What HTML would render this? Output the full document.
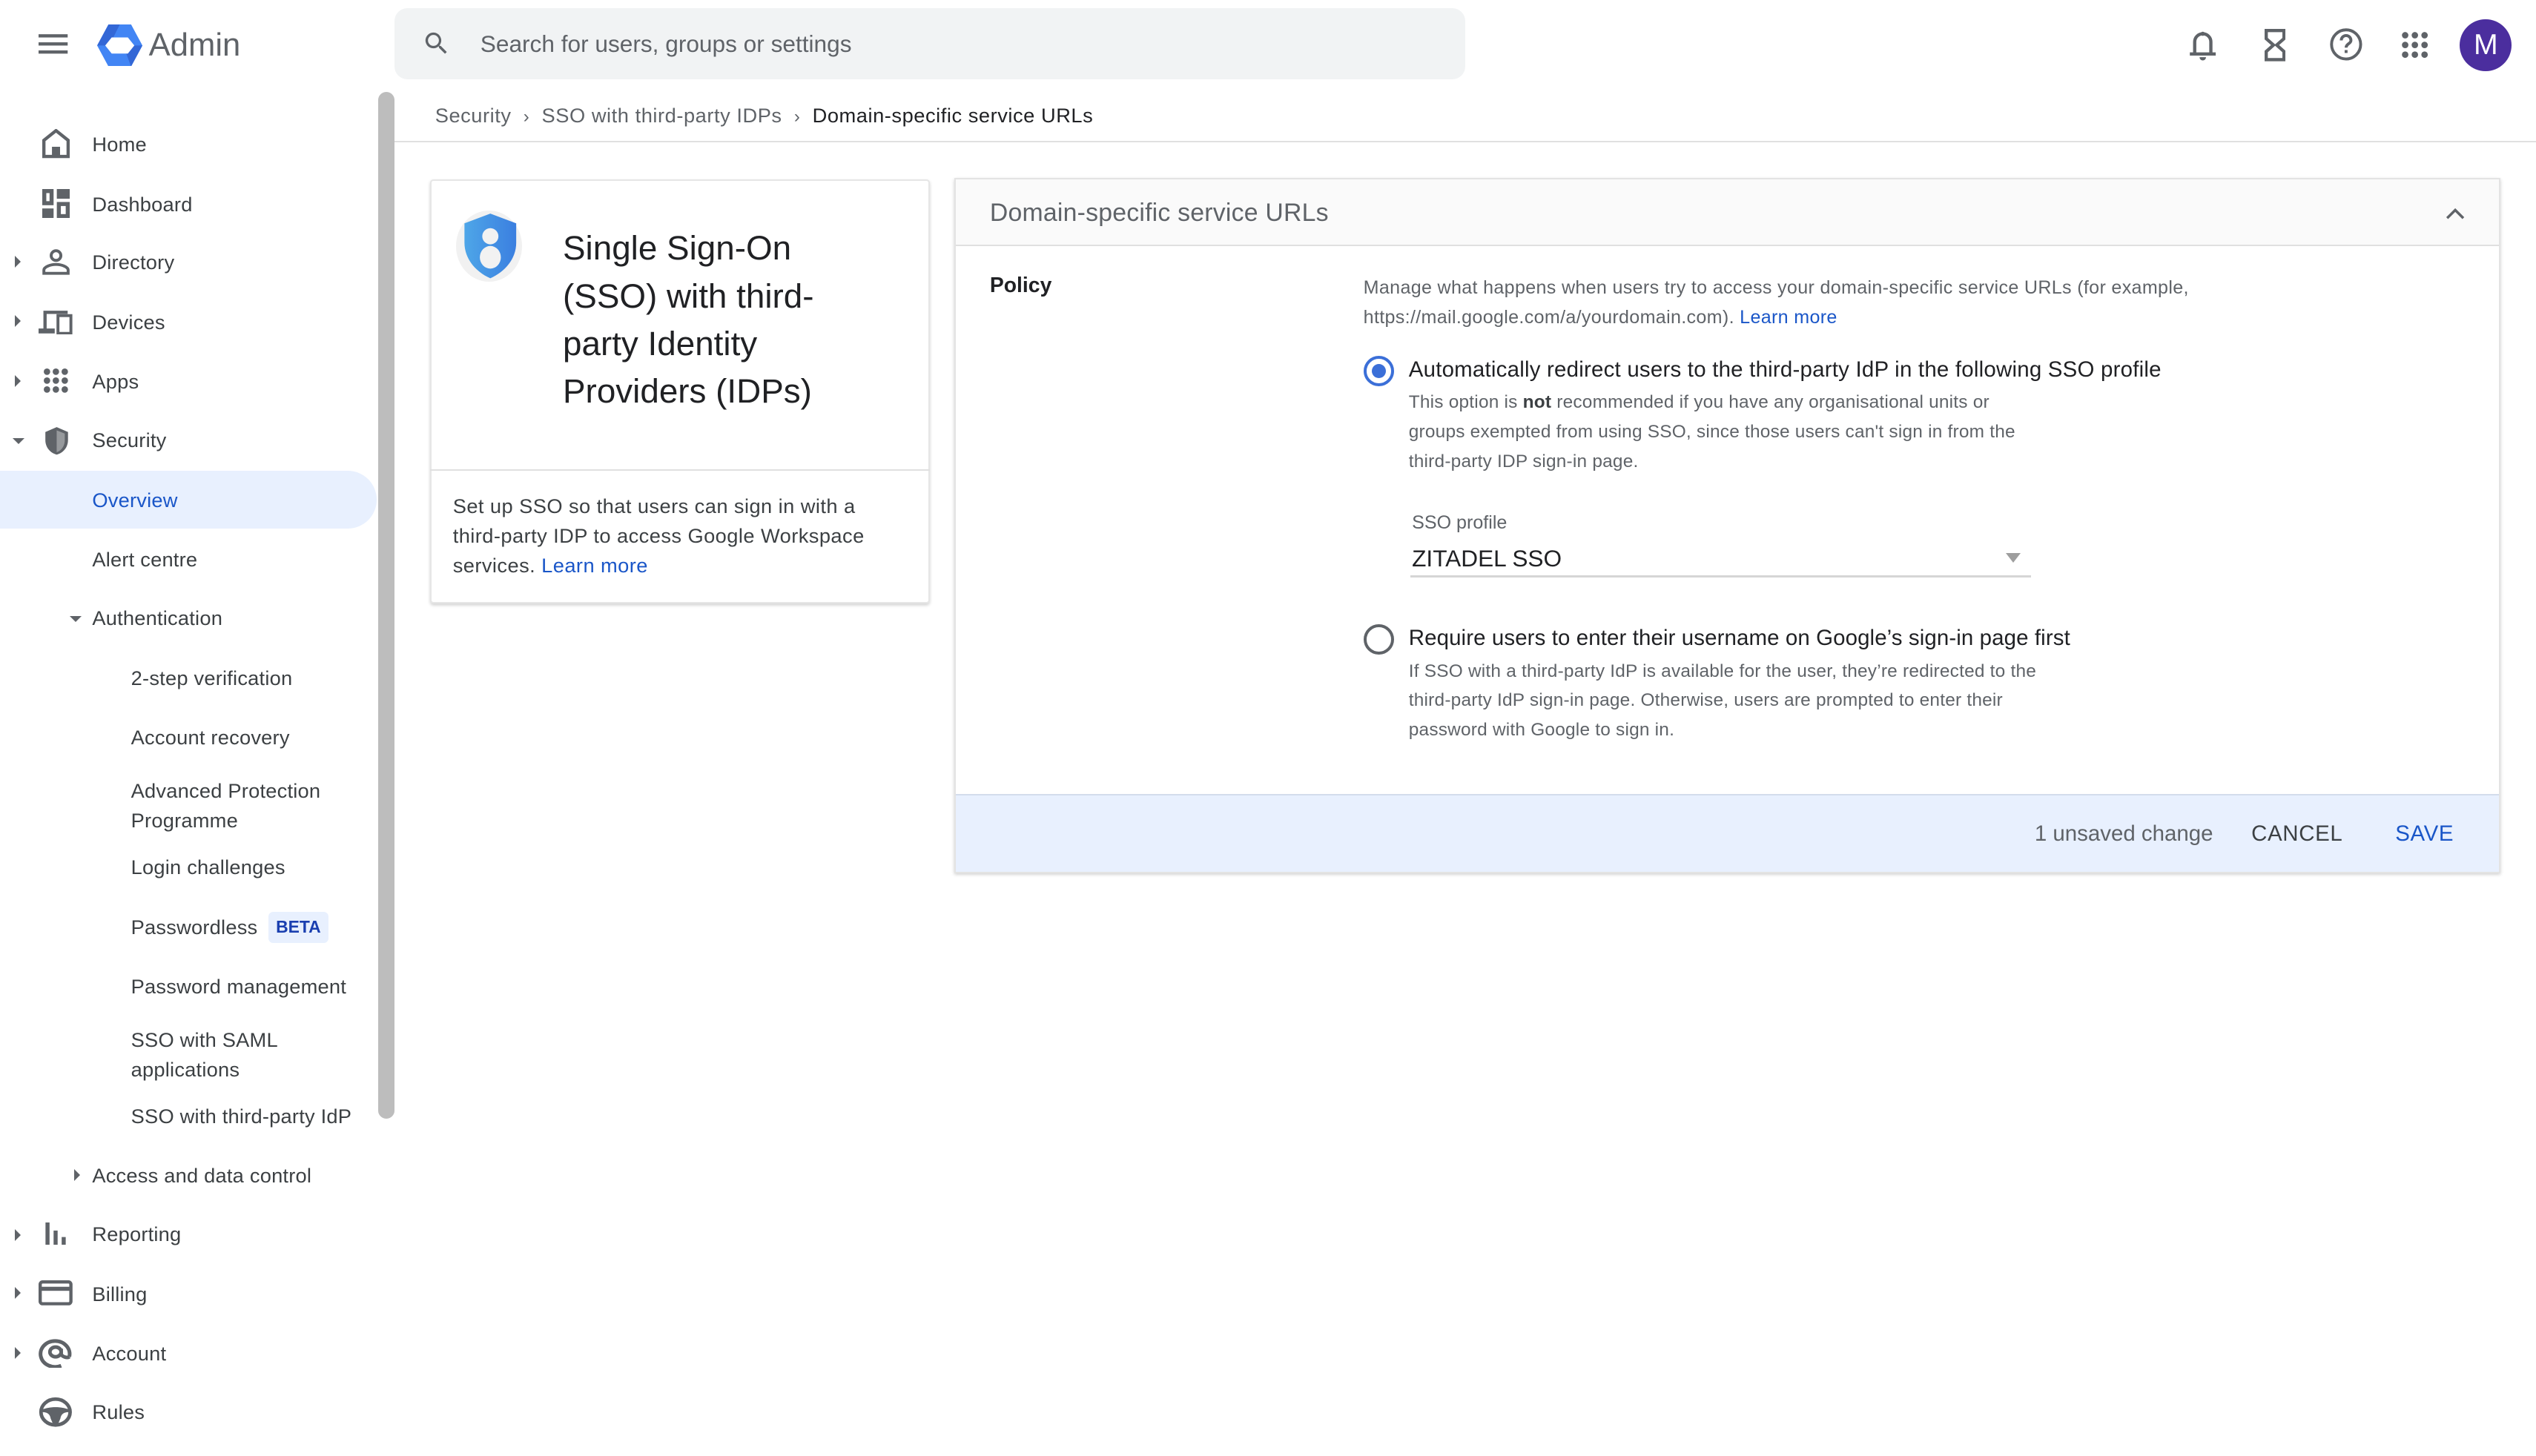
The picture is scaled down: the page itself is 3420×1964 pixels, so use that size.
<!DOCTYPE html>
<html><head><meta charset="utf-8"><style>
*{margin:0;padding:0;box-sizing:border-box}
html,body{width:3420px;height:1964px;overflow:hidden;background:#fff}
#w{zoom:2.18112;width:1568px;height:900.5px;position:relative;font-family:"Liberation Sans",Arial,sans-serif;color:#3c4043}
.a{position:absolute;white-space:nowrap}
.nav{font-size:12.5px;color:#3c4043;letter-spacing:.1px}
.ic{position:absolute}
.tri{position:absolute;width:0;height:0;border-top:4px solid transparent;border-bottom:4px solid transparent;border-left:4px solid #5f6368}
</style></head><body><div id="w">
<svg class="ic" style="left:24px;top:20px" width="18" height="14"><rect y="1" width="18" height="2" fill="#5f6368"/><rect y="6" width="18" height="2" fill="#5f6368"/><rect y="11" width="18" height="2" fill="#5f6368"/></svg>
<svg class="ic" style="left:60px;top:15px" width="28" height="26" viewBox="0 0 28 26"><polygon points="7,0 21,0 28,13 21,26 7,26 0,13" fill="#4285f4"/><polygon points="7,0 14,0 10,8 5,13 0,13" fill="#3367d6"/><polygon points="28,13 21,26 18,18 23,13" fill="#3367d6"/><polygon points="9,8 19,8 23,13 19,18 9,18 5,13" fill="#fff"/></svg>
<div class="a" style="left:92px;top:17px;font-size:20px;color:#5f6368">Admin</div>
<div class="a" style="left:244px;top:5px;width:662px;height:44px;background:#f1f3f4;border-radius:8px"></div>
<svg class="ic" style="left:261px;top:18px" width="18" height="18" viewBox="0 0 24 24"><path d="M15.5 14h-.8l-.3-.3A6.5 6.5 0 1 0 9.5 16a6.5 6.5 0 0 0 4.2-1.6l.3.3v.8l5 5 1.5-1.5-5-5zm-6 0a4.5 4.5 0 1 1 0-9 4.5 4.5 0 0 1 0 9z" fill="#5f6368"/></svg>
<div class="a" style="left:297px;top:19px;font-size:14.5px;color:#5f6368">Search for users, groups or settings</div>
<svg class="ic" style="left:1353px;top:18px" width="18" height="20" viewBox="0 0 18 20"><path d="M4 15V8a5 5 0 0 1 10 0v7" fill="none" stroke="#5f6368" stroke-width="2"/><rect x="1" y="14.5" width="16" height="2" fill="#5f6368"/><circle cx="9" cy="3" r="1.3" fill="#5f6368"/><path d="M7 17.5h4a2 2 0 0 1-4 0z" fill="#5f6368"/></svg>
<svg class="ic" style="left:1400px;top:18px" width="13" height="20" viewBox="0 0 13 20"><path d="M1 1h11v5L7.5 10 12 14v5H1v-5l4.5-4L1 6z" fill="none" stroke="#5f6368" stroke-width="2"/></svg>
<svg class="ic" style="left:1440px;top:17px" width="21" height="21" viewBox="0 0 21 21"><circle cx="10.5" cy="10.5" r="9" fill="none" stroke="#5f6368" stroke-width="1.8"/><path d="M7.5 8a3 3 0 0 1 6 0c0 2-3 2.2-3 4.5" fill="none" stroke="#5f6368" stroke-width="1.8"/><rect x="9.6" y="14" width="1.8" height="1.8" fill="#5f6368"/></svg>
<svg class="ic" style="left:1484px;top:19px" width="18" height="18"><g fill="#5f6368"><circle cx="3" cy="3" r="2"/><circle cx="9" cy="3" r="2"/><circle cx="15" cy="3" r="2"/><circle cx="3" cy="9" r="2"/><circle cx="9" cy="9" r="2"/><circle cx="15" cy="9" r="2"/><circle cx="3" cy="15" r="2"/><circle cx="9" cy="15" r="2"/><circle cx="15" cy="15" r="2"/></g></svg>
<div class="a" style="left:1521px;top:12px;width:32px;height:32px;border-radius:50%;background:#4b2e9e;color:#fff;font-size:18px;text-align:center;line-height:32px">M</div>
<div class="a" style="left:234px;top:57px;width:10px;height:635px;background:#bdbdbd;border-radius:5px"></div>
<div class="a" style="left:0;top:291px;width:233px;height:36px;background:#e8f0fe;border-radius:0 18px 18px 0"></div>
<svg class="ic" style="left:26px;top:80px" width="17" height="18" viewBox="0 0 17 18"><path d="M1 17V7l7.5-6L16 7v10H1z" fill="none" stroke="#5f6368" stroke-width="2"/><rect x="6" y="11" width="5" height="6" fill="#5f6368"/></svg>
<svg class="ic" style="left:26px;top:117px" width="17" height="18"><g fill="#5f6368"><rect x="0" y="0" width="7" height="10"/><rect x="9" y="0" width="8" height="6"/><rect x="0" y="12" width="7" height="6"/><rect x="9" y="8" width="8" height="10"/></g><rect x="2.5" y="2.5" width="2" height="5" fill="#fff"/><rect x="11.5" y="10.5" width="3" height="5" fill="#fff"/></svg>
<svg class="ic" style="left:26px;top:154px" width="17" height="16" viewBox="0 0 17 16"><circle cx="8.5" cy="4" r="3" fill="none" stroke="#5f6368" stroke-width="1.8"/><path d="M1 15v-2c0-2 4-3.5 7.5-3.5S16 11 16 13v2z" fill="none" stroke="#5f6368" stroke-width="1.8"/></svg>
<svg class="ic" style="left:24px;top:191px" width="21" height="16" viewBox="0 0 21 16"><path d="M3 1h15v2H5v9h-2zM0 12h10v3H0z" fill="#5f6368"/><rect x="12" y="4" width="8" height="11" fill="none" stroke="#5f6368" stroke-width="1.8"/></svg>
<svg class="ic" style="left:27px;top:228px" width="15" height="15"><g fill="#5f6368"><circle cx="2" cy="2" r="2"/><circle cx="7.5" cy="2" r="2"/><circle cx="13" cy="2" r="2"/><circle cx="2" cy="7.5" r="2"/><circle cx="7.5" cy="7.5" r="2"/><circle cx="13" cy="7.5" r="2"/><circle cx="2" cy="13" r="2"/><circle cx="7.5" cy="13" r="2"/><circle cx="13" cy="13" r="2"/></g></svg>
<svg class="ic" style="left:27px;top:263px" width="16" height="19" viewBox="0 0 16 19"><path d="M8 1L1 4v5c0 4.5 3 8 7 9 4-1 7-4.5 7-9V4z" fill="#5f6368"/><path d="M8 3v13.5c3-1 5-4 5-7.5V5z" fill="#fff" opacity=".35"/></svg>
<svg class="ic" style="left:26px;top:756px" width="15" height="14"><g fill="#5f6368"><rect x="2" y="0" width="2.5" height="14"/><rect x="7" y="5" width="2.5" height="9"/><rect x="12" y="9" width="2.5" height="5"/></g></svg>
<svg class="ic" style="left:24px;top:792px" width="22" height="16"><rect x="1" y="1" width="19" height="13.5" rx="1.5" fill="none" stroke="#5f6368" stroke-width="2"/><rect x="1" y="4" width="19" height="2.5" fill="#5f6368"/></svg>
<svg class="ic" style="left:24px;top:827px" width="21" height="19" viewBox="0 0 21 19"><path d="M19 12a9 8 0 1 0-5 5.5" fill="none" stroke="#5f6368" stroke-width="2.3"/><ellipse cx="10.5" cy="9" rx="3.5" ry="3" fill="none" stroke="#5f6368" stroke-width="2.2"/><path d="M14 7v3c0 2 4 3 5 2" fill="none" stroke="#5f6368" stroke-width="2.2"/></svg>
<svg class="ic" style="left:24px;top:864px" width="21" height="19" viewBox="0 0 21 19"><ellipse cx="10.5" cy="9.5" rx="9" ry="8" fill="none" stroke="#5f6368" stroke-width="2.2"/><path d="M2 8c3-1 5-1.5 8.5-1.5S16 7 19 8v1.5c-3 0-5 1-5.5 4L12 17H9l-1.5-3.5C7 10.5 5 9.5 2 9.5z" fill="#5f6368"/></svg>
<div class="tri" style="left:9px;top:158px"></div>
<div class="tri" style="left:9px;top:195px"></div>
<div class="tri" style="left:9px;top:232px"></div>
<div class="a" style="left:8px;top:271px;width:0;height:0;border-left:4px solid transparent;border-right:4px solid transparent;border-top:4px solid #5f6368"></div>
<div class="a" style="left:43px;top:381px;width:0;height:0;border-left:4px solid transparent;border-right:4px solid transparent;border-top:4px solid #5f6368"></div>
<div class="tri" style="left:46px;top:723px"></div>
<div class="tri" style="left:9px;top:760px"></div>
<div class="tri" style="left:9px;top:796px"></div>
<div class="tri" style="left:9px;top:833px"></div>
<div class="a nav" style="left:57px;top:82px">Home</div>
<div class="a nav" style="left:57px;top:119px">Dashboard</div>
<div class="a nav" style="left:57px;top:155px">Directory</div>
<div class="a nav" style="left:57px;top:192px">Devices</div>
<div class="a nav" style="left:57px;top:229px">Apps</div>
<div class="a nav" style="left:57px;top:265px">Security</div>
<div class="a nav" style="left:57px;top:302px;color:#1a56c8">Overview</div>
<div class="a nav" style="left:57px;top:339px">Alert centre</div>
<div class="a nav" style="left:57px;top:375px">Authentication</div>
<div class="a nav" style="left:81px;top:412px">2-step verification</div>
<div class="a nav" style="left:81px;top:449px">Account recovery</div>
<div class="a nav" style="left:81px;top:480px;line-height:18.5px">Advanced Protection<br>Programme</div>
<div class="a nav" style="left:81px;top:529px">Login challenges</div>
<div class="a nav" style="left:81px;top:566px">Passwordless</div>
<div class="a" style="left:166px;top:564px;width:37px;height:19px;background:#e8f0fe;border-radius:3px;color:#1a3fb0;font-size:10.5px;font-weight:bold;text-align:center;line-height:19px">BETA</div>
<div class="a nav" style="left:81px;top:603px">Password management</div>
<div class="a nav" style="left:81px;top:634px;line-height:18.5px">SSO with SAML<br>applications</div>
<div class="a nav" style="left:81px;top:683px">SSO with third-party IdP</div>
<div class="a nav" style="left:57px;top:720px">Access and data control</div>
<div class="a nav" style="left:57px;top:756px">Reporting</div>
<div class="a nav" style="left:57px;top:793px">Billing</div>
<div class="a nav" style="left:57px;top:830px">Account</div>
<div class="a nav" style="left:57px;top:866px">Rules</div>
<div class="a" style="left:269px;top:64px;font-size:12.5px;color:#5f6368;letter-spacing:.25px">Security &nbsp;<span style="font-size:11px">›</span>&nbsp; SSO with third-party IDPs &nbsp;<span style="font-size:11px">›</span>&nbsp; <span style="color:#202124">Domain-specific service URLs</span></div>
<div class="a" style="left:244px;top:87px;width:1324px;height:1px;background:#e0e0e0"></div>
<div class="a" style="left:266px;top:111px;width:309px;height:262px;background:#fff;border:1px solid #e6e6e6;border-radius:2px;box-shadow:0 1px 2px rgba(0,0,0,.18)"></div>
<div class="a" style="left:266px;top:290px;width:309px;height:1px;background:#e0e0e0"></div>
<div class="a" style="left:282px;top:130px;width:41px;height:44px;border-radius:50%;background:#f1f1f1"></div>
<svg class="ic" style="left:285px;top:131px" width="36" height="42" viewBox="0 0 36 42"><defs><linearGradient id="g" x1="0" x2="1"><stop offset="0" stop-color="#4ea6e8"/><stop offset="1" stop-color="#3b7fe0"/></linearGradient></defs><path d="M18 1L2 7v12c0 10 7 18 16 22 9-4 16-12 16-22V7z" fill="url(#g)"/><circle cx="18" cy="15" r="5" fill="#f2f2f2"/><ellipse cx="18" cy="28" rx="6.5" ry="7" fill="#f2f2f2"/></svg>
<div class="a" style="left:348px;top:139px;font-size:21px;line-height:29.5px;color:#202124;white-space:normal;width:200px">Single Sign-On (SSO) with third-party Identity Providers (IDPs)</div>
<div class="a" style="left:280px;top:304px;font-size:12.5px;line-height:18.3px;color:#3c4043;white-space:normal;width:264px;letter-spacing:.2px">Set up SSO so that users can sign in with a third-party IDP to access Google Workspace services. <span style="color:#1a56c8">Learn more</span></div>
<div class="a" style="left:590px;top:110px;width:956px;height:430px;background:#fff;border:1px solid #e3e3e3;box-shadow:0 1px 2px rgba(0,0,0,.2)"></div>
<div class="a" style="left:591px;top:111px;width:954px;height:41px;background:#fafafa;border-bottom:1px solid #e0e0e0"></div>
<div class="a" style="left:612px;top:123px;font-size:15.5px;color:#5f6368;letter-spacing:.1px">Domain-specific service URLs</div>
<svg class="ic" style="left:1512px;top:128px" width="12" height="8"><path d="M1 7l5-5 5 5" fill="none" stroke="#5f6368" stroke-width="1.6"/></svg>
<div class="a" style="left:612px;top:169px;font-size:13px;font-weight:bold;color:#202124">Policy</div>
<div class="a" style="left:843px;top:169px;font-size:11.5px;line-height:18.3px;color:#5f6368;letter-spacing:.15px">Manage what happens when users try to access your domain-specific service URLs (for example,<br>https://mail.google.com/a/yourdomain.com). <span style="color:#1a56c8">Learn more</span></div>
<div class="a" style="left:843px;top:220px;width:19px;height:19px;border-radius:50%;border:2px solid #3b6fd8"></div>
<div class="a" style="left:848px;top:225px;width:9px;height:9px;border-radius:50%;background:#3b6fd8"></div>
<div class="a" style="left:871px;top:221px;font-size:13.5px;color:#202124;letter-spacing:.1px">Automatically redirect users to the third-party IdP in the following SSO profile</div>
<div class="a" style="left:871px;top:240px;font-size:11.2px;line-height:18.3px;color:#5f6368;letter-spacing:.1px">This option is <b style="color:#3c4043">not</b> recommended if you have any organisational units or<br>groups exempted from using SSO, since those users can't sign in from the<br>third-party IDP sign-in page.</div>
<div class="a" style="left:873px;top:317px;font-size:11.5px;color:#5f6368">SSO profile</div>
<div class="a" style="left:873px;top:337px;font-size:14.5px;color:#202124">ZITADEL SSO</div>
<div class="a" style="left:1240px;top:342px;width:0;height:0;border-left:5px solid transparent;border-right:5px solid transparent;border-top:6px solid #9e9e9e"></div>
<div class="a" style="left:872px;top:356px;width:384px;height:1px;background:#d6d6d6"></div>
<div class="a" style="left:843px;top:386px;width:19px;height:19px;border-radius:50%;border:2px solid #5f6368"></div>
<div class="a" style="left:871px;top:387px;font-size:13.5px;color:#202124;letter-spacing:.05px">Require users to enter their username on Google’s sign-in page first</div>
<div class="a" style="left:871px;top:406px;font-size:11.2px;line-height:18.3px;color:#5f6368;letter-spacing:.1px">If SSO with a third-party IdP is available for the user, they’re redirected to the<br>third-party IdP sign-in page. Otherwise, users are prompted to enter their<br>password with Google to sign in.</div>
<div class="a" style="left:591px;top:491px;width:954px;height:48px;background:#e8f0fe;border-top:1px solid #d3dcec"></div>
<div class="a" style="left:1258px;top:508px;font-size:13.5px;color:#5f6368">1 unsaved change</div>
<div class="a" style="left:1392px;top:508px;font-size:13.5px;color:#3c4043;letter-spacing:.3px">CANCEL</div>
<div class="a" style="left:1481px;top:508px;font-size:13.5px;color:#1a56c8;letter-spacing:.3px">SAVE</div>
</div></body></html>
